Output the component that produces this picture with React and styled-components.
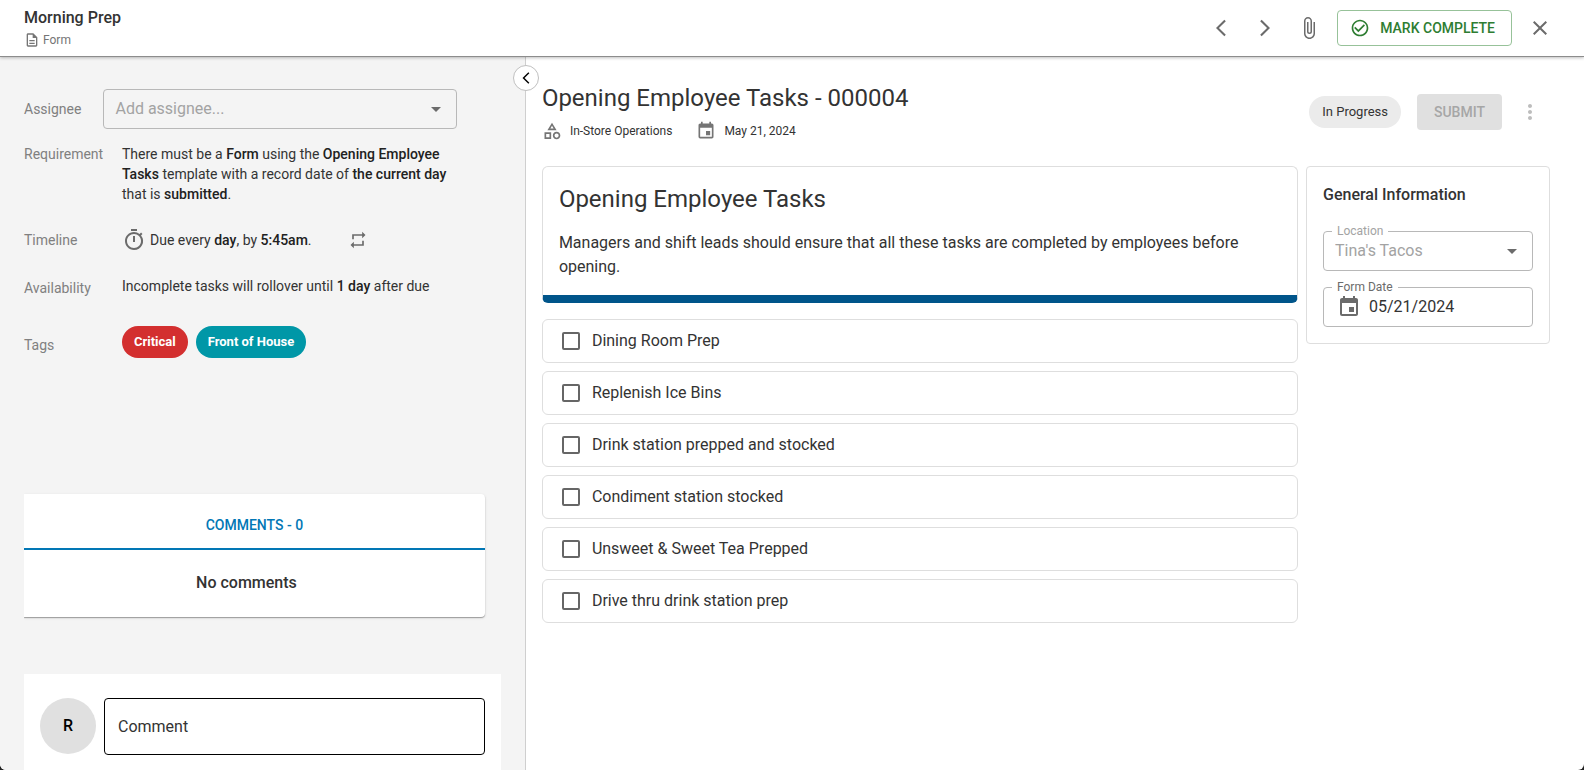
import React, { useState } from 'react';
import styled, { createGlobalStyle } from 'styled-components';
import {
  MdArrowBackIosNew,
  MdArrowDropDown,
  MdArrowForwardIos,
  MdAttachFile,
  MdCheckCircleOutline,
  MdClose,
  MdEvent,
  MdMoreVert,
  MdOutlineCategory,
  MdOutlineDescription,
  MdOutlineTimer,
  MdRepeat,
} from 'react-icons/md';

const tasks = [
  'Dining Room Prep',
  'Replenish Ice Bins',
  'Drink station prepped and stocked',
  'Condiment station stocked',
  'Unsweet & Sweet Tea Prepped',
  'Drive thru drink station prep',
];

export default function App() {
  const [open, setOpen] = useState(true);

  return (
    <>
      <GlobalStyle />
      <Page>
        <Header />
        <Content>
          {open && <DetailsPanel />}
          <FormArea>
            <CollapseButton
              type="button"
              aria-label="Toggle details"
              onClick={() => setOpen(!open)}
            >
              <MdArrowBackIosNew size={14} />
            </CollapseButton>
            <FormHeader />
            <FormBody>
              <Checklist />
              <GeneralInfo />
            </FormBody>
          </FormArea>
        </Content>
      </Page>
    </>
  );
}

function Header() {
  return (
    <StyledHeader>
      <div>
        <HeaderTitle>Morning Prep</HeaderTitle>
        <HeaderType>
          <MdOutlineDescription size={16} />
          Form
        </HeaderType>
      </div>
      <HeaderActions>
        <IconButton type="button" aria-label="Previous">
          <MdArrowBackIosNew size={20} />
        </IconButton>
        <IconButton type="button" aria-label="Next">
          <MdArrowForwardIos size={20} />
        </IconButton>
        <IconButton type="button" aria-label="Attachments">
          <MdAttachFile size={24} />
        </IconButton>
        <CompleteButton type="button">
          <MdCheckCircleOutline size={20} />
          Mark complete
        </CompleteButton>
        <IconButton type="button" aria-label="Close">
          <MdClose size={24} />
        </IconButton>
      </HeaderActions>
    </StyledHeader>
  );
}

function DetailsPanel() {
  return (
    <Aside>
      <AssigneeRow>
        <Label as="label" htmlFor="assignee">
          Assignee
        </Label>
        <SelectBox>
          <Select id="assignee" defaultValue="" $muted>
            <option value="">Add assignee...</option>
          </Select>
          <MdArrowDropDown size={24} />
        </SelectBox>
      </AssigneeRow>
      <Details>
        <Label as="dt">Requirement</Label>
        <Detail>
          There must be a <b>Form</b> using the <b>Opening Employee Tasks</b>{' '}
          template with a record date of <b>the current day</b> that is{' '}
          <b>submitted</b>.
        </Detail>
        <Label as="dt">Timeline</Label>
        <Timeline>
          <MdOutlineTimer size={24} />
          <span>
            Due every <b>day</b>, by <b>5:45am</b>.
          </span>
          <RepeatIcon size={20} />
        </Timeline>
        <Label as="dt" $lineHeight={24}>
          Availability
        </Label>
        <Detail>
          Incomplete tasks will rollover until <b>1 day</b> after due
        </Detail>
        <Label as="dt" $lineHeight={38}>
          Tags
        </Label>
        <Tags>
          <Tag $color="#d32f2f">Critical</Tag>
          <Tag $color="#0097a7">Front of House</Tag>
        </Tags>
      </Details>
      <CommentsCard>
        <CommentsTab type="button">Comments - 0</CommentsTab>
        <NoComments>No comments</NoComments>
      </CommentsCard>
      <CommentForm>
        <Avatar>R</Avatar>
        <CommentInput aria-label="Comment" placeholder="Comment" />
      </CommentForm>
    </Aside>
  );
}

function FormHeader() {
  return (
    <StyledFormHeader>
      <div>
        <Title>Opening Employee Tasks - 000004</Title>
        <Meta>
          <MetaItem>
            <MdOutlineCategory size={20} />
            In-Store Operations
          </MetaItem>
          <MetaItem>
            <MdEvent size={20} />
            May 21, 2024
          </MetaItem>
        </Meta>
      </div>
      <FormActions>
        <Status>In Progress</Status>
        <SubmitButton type="button" disabled>
          Submit
        </SubmitButton>
        <IconButton type="button" aria-label="More" disabled>
          <MdMoreVert size={24} />
        </IconButton>
      </FormActions>
    </StyledFormHeader>
  );
}

function Checklist() {
  return (
    <ChecklistColumn>
      <IntroCard>
        <Title as="h2">Opening Employee Tasks</Title>
        <IntroText>
          Managers and shift leads should ensure that all these tasks are
          completed by employees before opening.
        </IntroText>
      </IntroCard>
      <TaskList>
        {tasks.map(task => (
          <li key={task}>
            <TaskLabel>
              <Checkbox type="checkbox" />
              {task}
            </TaskLabel>
          </li>
        ))}
      </TaskList>
    </ChecklistColumn>
  );
}

function GeneralInfo() {
  return (
    <InfoCard>
      <InfoTitle>General Information</InfoTitle>
      <Field>
        <FieldLabel htmlFor="location" $disabled>
          Location
        </FieldLabel>
        <Select id="location" disabled $muted>
          <option>Tina's Tacos</option>
        </Select>
        <MdArrowDropDown size={24} />
      </Field>
      <Field>
        <FieldLabel htmlFor="form-date">Form Date</FieldLabel>
        <DateIcon size={24} />
        <DateInput id="form-date" type="text" defaultValue="05/21/2024" />
      </Field>
    </InfoCard>
  );
}

const GlobalStyle = createGlobalStyle`
  *,
  *::before,
  *::after {
    box-sizing: border-box;
  }

  body {
    margin: 0;
    font-family: Roboto, 'Liberation Sans', sans-serif;
    font-size: 14px;
    line-height: 20px;
    color: #333333;
    background: #222222;
  }

  h1, h2, h3, p, ul, dl, dd {
    margin: 0;
    padding: 0;
  }

  ul {
    list-style: none;
  }

  button, input, select {
    font: inherit;
  }

  b {
    font-weight: 500;
    color: #212121;
  }

  svg {
    flex-shrink: 0;
  }
`;

const Page = styled.div`
  display: flex;
  flex-direction: column;
  height: 100vh;
  overflow: hidden;
  border-radius: 0 0 6px 6px;
  background: #ffffff;
`;

const StyledHeader = styled.header`
  display: flex;
  justify-content: space-between;
  align-items: center;
  height: 57px;
  flex-shrink: 0;
  padding: 0 24px;
  border-bottom: 1px solid #8c8c8c;
  background: #ffffff;
  box-shadow: 0 1px 3px rgba(0, 0, 0, 0.25);
  z-index: 1;
`;

const HeaderTitle = styled.h1`
  font-size: 16px;
  font-weight: 500;
  line-height: 24px;
`;

const HeaderType = styled.p`
  display: flex;
  align-items: center;
  gap: 3px;
  font-size: 12px;
  color: #757575;
`;

const HeaderActions = styled.div`
  display: flex;
  align-items: center;
  gap: 4px;
`;

const IconButton = styled.button`
  display: flex;
  align-items: center;
  justify-content: center;
  width: 40px;
  height: 40px;
  padding: 0;
  border: none;
  background: none;
  color: #6b6b6b;
  cursor: pointer;

  &:disabled {
    color: #bdbdbd;
    cursor: default;
  }
`;

const CompleteButton = styled.button`
  display: flex;
  align-items: center;
  gap: 10px;
  height: 36px;
  margin: 0 4px;
  padding: 0 16px 0 12px;
  border: 1px solid #97c299;
  border-radius: 4px;
  background: none;
  font-weight: 500;
  text-transform: uppercase;
  color: #2e7d32;
  cursor: pointer;
`;

const Content = styled.div`
  display: flex;
  flex: 1;
  min-height: 0;
`;

const Aside = styled.aside`
  display: flex;
  flex-direction: column;
  flex: 0 0 33.2%;
  padding: 32px 24px 0;
  border-right: 1px solid #cfcfcf;
  background: #f4f4f4;
`;

const AssigneeRow = styled.div`
  display: flex;
  align-items: center;
  gap: 22px;
  padding-right: 44px;
`;

const Label = styled.span`
  font-size: 14px;
  line-height: ${({ $lineHeight = 20 }) => $lineHeight}px;
  color: #808080;
`;

const SelectBox = styled.div`
  display: flex;
  align-items: center;
  flex: 1;
  height: 40px;
  padding-right: 8px;
  border: 1px solid #b8b8b8;
  border-radius: 4px;
  color: #6b6b6b;
`;

const Select = styled.select`
  flex: 1;
  min-width: 0;
  padding: 0 11px;
  border: none;
  outline: none;
  appearance: none;
  background: none;
  font-size: 16px;
  opacity: 1;
  color: ${({ $muted }) => ($muted ? '#a3a3a3' : '#333333')};
`;

const Details = styled.dl`
  display: grid;
  grid-template-columns: 98px 1fr;
  align-items: start;
  row-gap: 26px;
  margin-top: 15px;
  padding-right: 40px;
`;

const Detail = styled.dd`
  line-height: 20px;
`;

const Timeline = styled.dd`
  display: flex;
  align-items: center;
  gap: 4px;
  height: 20px;

  svg {
    color: #6b6b6b;
  }
`;

const RepeatIcon = styled(MdRepeat)`
  margin-left: 32px;
`;

const Tags = styled.dd`
  display: flex;
  gap: 8px;
`;

const Tag = styled.span`
  height: 32px;
  padding: 0 12px;
  border-radius: 16px;
  background: ${({ $color }) => $color};
  font-size: 13px;
  font-weight: 700;
  line-height: 32px;
  color: #ffffff;
`;

const CommentsCard = styled.section`
  margin: auto 16px 57px 0;
  border-radius: 0 4px 4px 0;
  background: #ffffff;
  box-shadow: 0 1px 1px rgba(0, 0, 0, 0.3), 0 1px 3px rgba(0, 0, 0, 0.12);
  clip-path: inset(-4px -4px -4px 0);
`;

const CommentsTab = styled.button`
  display: block;
  width: 100%;
  height: 56px;
  padding: 8px 0 0;
  border: none;
  border-bottom: 2px solid #0277b5;
  background: none;
  font-weight: 500;
  text-transform: uppercase;
  color: #0277b5;
  cursor: pointer;
`;

const NoComments = styled.p`
  padding: 21px 16px 22px 0;
  font-size: 16px;
  font-weight: 500;
  line-height: 24px;
  text-align: center;
`;

const CommentForm = styled.form`
  display: flex;
  gap: 8px;
  padding: 24px 16px 15px;
  background: #ffffff;
`;

const Avatar = styled.span`
  width: 56px;
  height: 56px;
  border-radius: 50%;
  background: #e0e0e0;
  font-size: 16px;
  font-weight: 500;
  line-height: 56px;
  text-align: center;
  color: #000000;
`;

const CommentInput = styled.input`
  flex: 1;
  height: 57px;
  padding: 0 13px;
  border: 1px solid #000000;
  border-radius: 4px;
  font-size: 16px;

  &::placeholder {
    color: #333333;
  }
`;

const FormArea = styled.main`
  position: relative;
  flex: 1;
  min-width: 0;
  padding: 25px 34px 24px 16px;
`;

const CollapseButton = styled.button`
  position: absolute;
  top: 8px;
  left: -13px;
  display: flex;
  align-items: center;
  justify-content: center;
  width: 26px;
  height: 26px;
  padding: 0;
  border: 1px solid #c0c0c0;
  border-radius: 50%;
  background: #ffffff;
  color: #000000;
  cursor: pointer;
`;

const StyledFormHeader = styled.div`
  display: flex;
  justify-content: space-between;
  align-items: center;
`;

const Title = styled.h1`
  font-size: 24px;
  font-weight: 400;
  line-height: 32px;
`;

const Meta = styled.div`
  display: flex;
  gap: 24px;
  margin-top: 7px;
`;

const MetaItem = styled.span`
  display: flex;
  align-items: center;
  gap: 8px;
  font-size: 12px;

  svg {
    color: #757575;
  }
`;

const FormActions = styled.div`
  display: flex;
  align-items: center;
  gap: 8px;
`;

const Status = styled.span`
  height: 32px;
  margin-right: 8px;
  padding: 0 13px;
  border-radius: 16px;
  background: #ebebeb;
  font-size: 13px;
  line-height: 32px;
`;

const SubmitButton = styled.button`
  min-width: 85px;
  height: 36px;
  padding: 0 16px;
  border: none;
  border-radius: 4px;
  background: #e0e0e0;
  font-weight: 500;
  text-transform: uppercase;
  color: #a6a6a6;
`;

const FormBody = styled.div`
  display: flex;
  align-items: flex-start;
  gap: 8px;
  margin-top: 25px;
`;

const ChecklistColumn = styled.div`
  flex: 1;
  min-width: 0;
`;

const IntroCard = styled.section`
  padding: 16px;
  border: 1px solid #dedede;
  border-bottom: 8px solid #00558a;
  border-radius: 6px;
`;

const IntroText = styled.p`
  margin-top: 16px;
  font-size: 16px;
  line-height: 24px;
`;

const TaskList = styled.ul`
  display: flex;
  flex-direction: column;
  gap: 8px;
  margin-top: 16px;
`;

const TaskLabel = styled.label`
  display: flex;
  align-items: center;
  gap: 12px;
  height: 44px;
  padding: 0 19px;
  border: 1px solid #dedede;
  border-radius: 6px;
  font-size: 16px;
`;

const Checkbox = styled.input`
  width: 18px;
  height: 18px;
  margin: 0;
  border: 2px solid #666666;
  border-radius: 2px;
  appearance: none;

  &:checked {
    background: #0277b5;
    border-color: #0277b5;
  }
`;

const InfoCard = styled.section`
  display: flex;
  flex-direction: column;
  gap: 16px;
  flex: 0 0 244px;
  min-width: 0;
  padding: 16px;
  border: 1px solid #dedede;
  border-radius: 4px;
`;

const InfoTitle = styled.h3`
  margin-bottom: 8px;
  font-size: 16px;
  font-weight: 500;
  line-height: 24px;
`;

const Field = styled(SelectBox)`
  position: relative;
  flex: none;
`;

const FieldLabel = styled.label`
  position: absolute;
  top: -9px;
  left: 8px;
  padding: 0 5px;
  background: #ffffff;
  font-size: 12px;
  line-height: 16px;
  color: ${({ $disabled }) => ($disabled ? '#a3a3a3' : '#6b6b6b')};
`;

const DateIcon = styled(MdEvent)`
  margin-left: 13px;
`;

const DateInput = styled.input`
  flex: 1;
  min-width: 0;
  padding: 0 8px;
  border: none;
  outline: none;
  background: none;
  font-size: 16px;
  color: #333333;
`;
